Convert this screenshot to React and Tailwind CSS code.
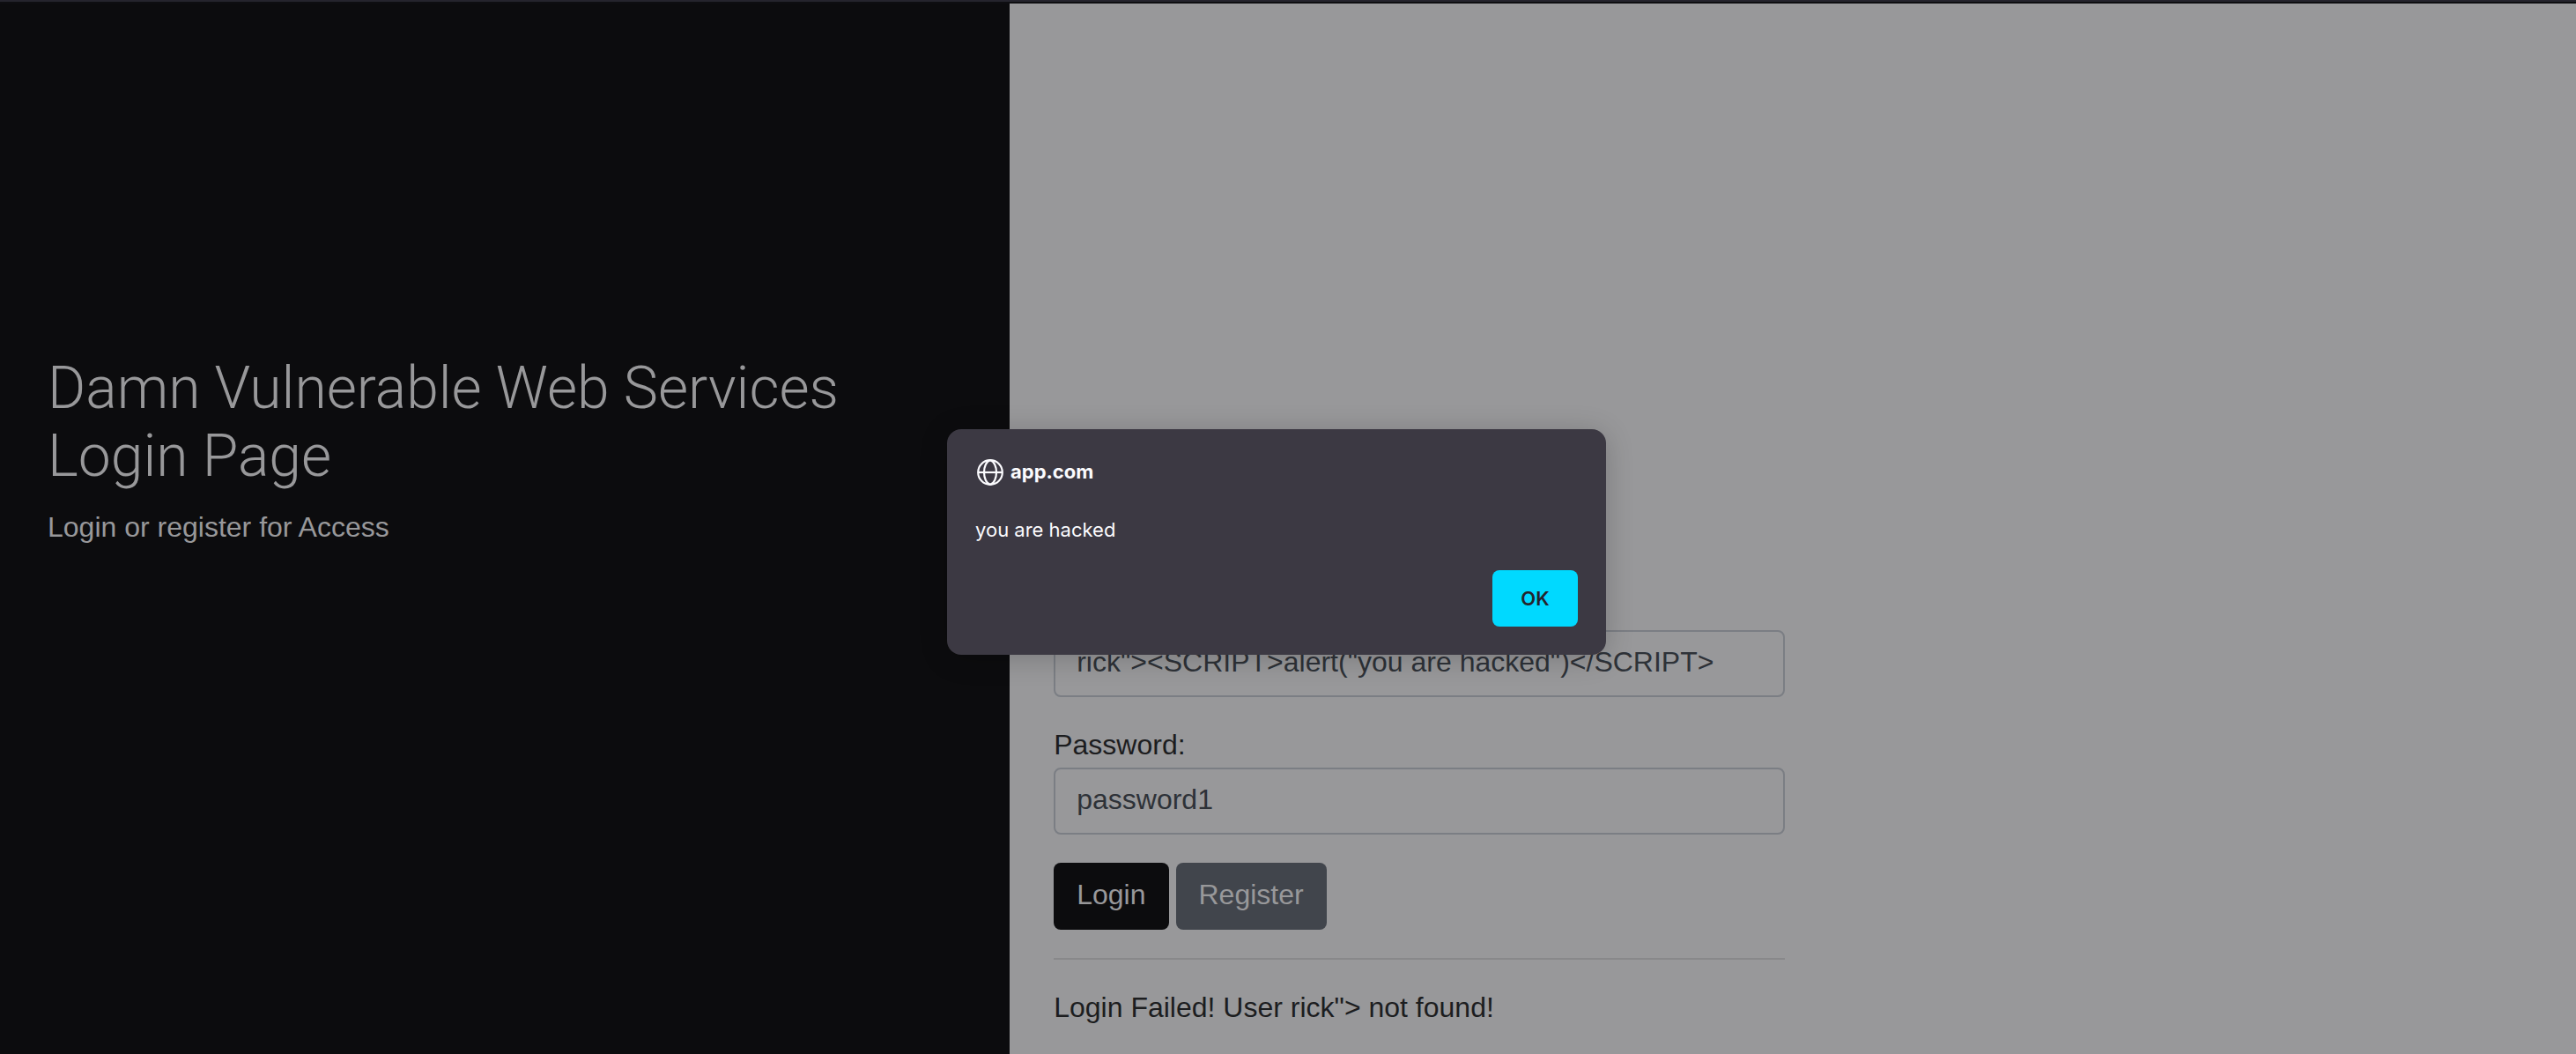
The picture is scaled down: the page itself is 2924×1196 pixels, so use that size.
const inputClass =
  "block h-[76px] w-full rounded-lg border-2 border-[#7b7e84] bg-[#98989a] px-6 pb-1 text-[32px] text-[#2e3238]";
const buttonClass = "h-[76px] rounded-lg px-[26px] pb-1 text-[32px] text-[#98989a]";

function GlobeIcon() {
  return (
    <svg className="size-8" viewBox="0 0 32 32" fill="none" stroke="currentColor" strokeWidth="2.2" aria-hidden="true">
      <circle cx="17" cy="17" r="13.8" />
      <path d="M17 3.2C12.4 4.4 10 11 10 17s2.400 12.600 7 13.800C21.600 29.600 24 23 24 17S21.600 4.400 17 3.200Z" />
      <path d="M3.200 17h27.600" />
    </svg>
  );
}

function Sidebar() {
  return (
    <aside className="w-[39.2%] bg-[#0c0c0e] pl-[54px] pr-10 pt-[398px] text-[#98989a]">
      <h1 className="font-['Roboto','Liberation_Sans',sans-serif] text-[66px] font-[350] leading-[77px]">
        Damn Vulnerable Web Services
        <br />
        Login Page
      </h1>
      <p className="mt-[18px] text-[32px] leading-[48px]">Login or register for Access</p>
    </aside>
  );
}

function LoginForm() {
  return (
    <main className="flex-1 bg-[#98989a] pl-[50px] pt-[711px]">
      <form className="w-[48%]" onSubmit={(e) => e.preventDefault()}>
        <input
          aria-label="Username"
          type="text"
          defaultValue={'rick"><SCRIPT>alert("you are hacked")</SCRIPT>'}
          className={inputClass}
        />
        <label htmlFor="password" className="mt-8 block pb-1 text-[32px] leading-[44px]">
          Password:
        </label>
        <input id="password" type="text" defaultValue="password1" className={inputClass} />
        <div className="mt-8 flex gap-2">
          <button type="submit" className={`${buttonClass} bg-[#0c0c0e]`}>Login</button>
          <button type="button" className={`${buttonClass} bg-[#41454c]`}>Register</button>
        </div>
        <hr className="my-8 border-t-2 border-[#88888a]" />
        <p className="pb-1 text-[32px] leading-[44px]">{'Login Failed! User rick"> not found!'}</p>
      </form>
    </main>
  );
}

function AlertDialog() {
  return (
    <div className="absolute inset-0 flex items-start justify-center pr-[26px] pt-[487px]">
      <div
        role="alertdialog"
        aria-labelledby="alert-origin"
        aria-describedby="alert-message"
        className="flex w-[748px] flex-col rounded-2xl bg-[#3c3943] p-8 font-['Inter',sans-serif] text-[22px] leading-8 text-[#fbfbfe] shadow-[0_4px_32px_rgba(0,0,0,0.2)]"
      >
        <div className="flex items-center gap-2">
          <GlobeIcon />
          <h2 id="alert-origin" className="font-bold">app.com</h2>
        </div>
        <p id="alert-message" className="mt-[34px]">you are hacked</p>
        <button
          type="button"
          className="mt-[30px] h-16 w-[97px] self-end rounded-lg bg-[#00d9ff] font-semibold text-[#25242c]"
        >
          OK
        </button>
      </div>
    </div>
  );
}

export default function App() {
  return (
    <div className="relative flex min-h-screen flex-col overflow-hidden font-['Liberation_Sans',Arial,sans-serif] text-[#1c1d1f]">
      <div className="h-1 border-b-2 border-[#0e0e11] bg-[#25242d]" />
      <div className="flex flex-1">
        <Sidebar />
        <LoginForm />
      </div>
      <AlertDialog />
    </div>
  );
}
